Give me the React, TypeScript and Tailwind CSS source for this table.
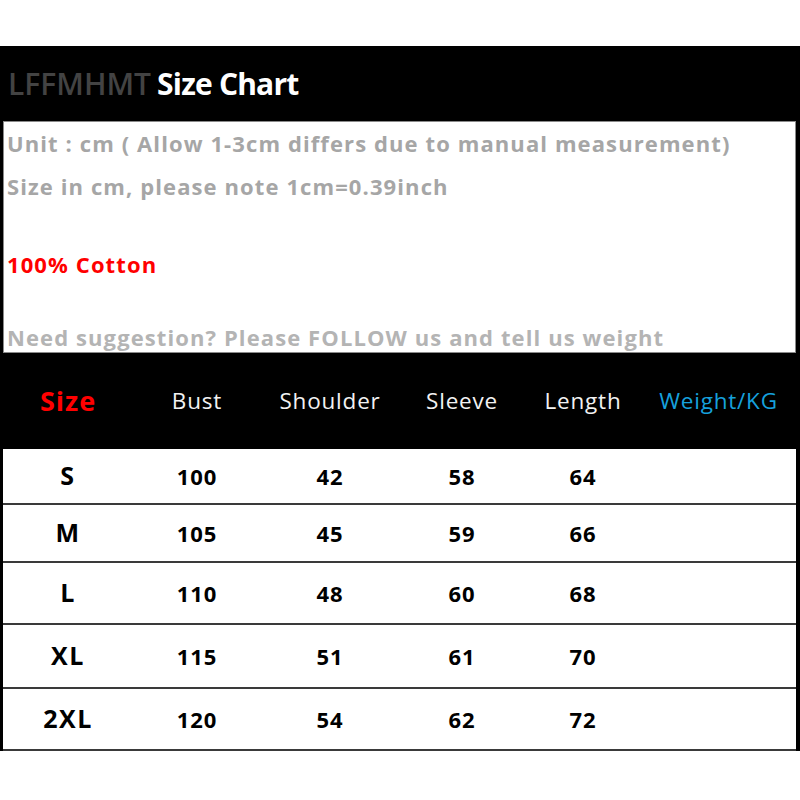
const font = { fontFamily: "'Open Sans', Lato, 'Liberation Sans', sans-serif" };

const rows = [
  { size: "S", bust: 100, shoulder: 42, sleeve: 58, length: 64, h: "h-[56px]" },
  { size: "M", bust: 105, shoulder: 45, sleeve: 59, length: 66, h: "h-[58px]" },
  { size: "L", bust: 110, shoulder: 48, sleeve: 60, length: 68, h: "h-[62px]" },
  { size: "XL", bust: 115, shoulder: 51, sleeve: 61, length: 70, h: "h-[64px]" },
  { size: "2XL", bust: 120, shoulder: 54, sleeve: 62, length: 72, h: "h-[62px]" },
];

const cols = "grid grid-cols-[130px_128px_138px_126px_116px_155px]";

export default function App() {
  return (
    <div className="w-[800px] h-[800px] bg-white pt-[46px]" style={font}>
      <div className="border-l-[3px] border-r-[4px] border-black">
        {/* Title bar */}
        <div className="h-[75px] bg-black flex items-center pl-[5px] text-[30px]">
          <span className="font-semibold text-[#434343]">LFFMHMT</span>
          <span className="ml-[6px] font-bold text-white tracking-[-0.8px]">Size Chart</span>
        </div>

        {/* Notes */}
        <div className="h-[232px] bg-white border border-[#8a8a8a] pl-[3px] pt-[6px] text-[22px] font-bold leading-[30px] tracking-[1.1px] text-[#a6a6a6]">
          <p>Unit : cm ( Allow 1-3cm differs due to manual measurement)</p>
          <p className="mt-[13px]">Size in cm, please note 1cm=0.39inch</p>
          <p className="mt-[48px] text-[#ff0000]">100% Cotton</p>
          <p className="mt-[43px] text-[#b4b4b4]">Need suggestion? Please FOLLOW us and tell us weight</p>
        </div>

        {/* Table head */}
        <div className={`${cols} h-[96px] bg-black items-center text-center text-[22.5px] tracking-[0.8px] text-[#f2f2f2]`}>
          <span className="text-[27px] font-bold tracking-[1px] text-[#ff0000]">Size</span>
          <span>Bust</span>
          <span>Shoulder</span>
          <span>Sleeve</span>
          <span>Length</span>
          <span className="text-[#16a0dc]">Weight/KG</span>
        </div>

        {/* Rows */}
        {rows.map((r) => (
          <div
            key={r.size}
            className={`${cols} ${r.h} items-center text-center text-[22px] font-bold tracking-[1px] text-black border-b-2 border-[#3a3a3a]`}
          >
            <span className="text-[25px] tracking-[1.5px]">{r.size}</span>
            <span>{r.bust}</span>
            <span>{r.shoulder}</span>
            <span>{r.sleeve}</span>
            <span>{r.length}</span>
            <span />
          </div>
        ))}
      </div>
    </div>
  );
}
